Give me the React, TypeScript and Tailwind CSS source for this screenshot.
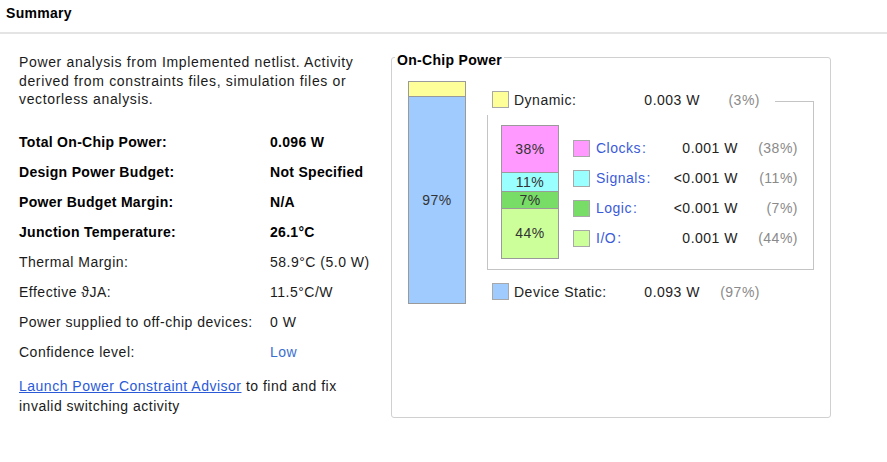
import React from "react";

const font = { fontFamily: '"Liberation Sans", Arial, sans-serif' };

function Sq({ color }: { color: string }) {
  return <div className={`w-[17px] h-[17px] border border-[#a8a8a8] shrink-0 ${color}`} />;
}

function TopRow({ color, label, value, pct, line }: { color: string; label: string; value: string; pct: string; line?: boolean }) {
  return (
    <div className="flex items-start h-[24px] pl-[5px]">
      <Sq color={color} />
      <div className="ml-[5px] w-[96px] leading-[18px] text-[#222]">{label}</div>
      <div className="w-[90px] text-right leading-[18px] text-[#222]">{value}</div>
      <div className="w-[60px] text-right leading-[18px] text-[#8a8a8a]">{pct}</div>
      {line ? <div className="ml-[15px] flex-1 self-stretch mt-[10px] border-t border-r border-[#c4c4c4]" /> : null}
    </div>
  );
}

function LegRow({ color, label, value, pct }: { color: string; label: string; value: string; pct: string }) {
  return (
    <div className="flex items-center h-[30px]">
      <Sq color={color} />
      <div className="ml-[6px] w-[70px] text-[#3a5bd9] whitespace-nowrap">
        {label}
        <span className="ml-[1px]">:</span>
      </div>
      <div className="w-[72px] text-right text-[#222] whitespace-nowrap">{value}</div>
      <div className="w-[60px] text-right text-[#8a8a8a]">{pct}</div>
    </div>
  );
}

export default function App() {
  const rows: [string, string, boolean, string?][] = [
    ["Total On-Chip Power:", "0.096 W", true],
    ["Design Power Budget:", "Not Specified", true],
    ["Power Budget Margin:", "N/A", true],
    ["Junction Temperature:", "26.1°C", true],
    ["Thermal Margin:", "58.9°C (5.0 W)", false],
    ["Effective ϑJA:", "11.5°C/W", false],
    ["Power supplied to off-chip devices:", "0 W", false],
    ["Confidence level:", "Low", false, "link"],
  ];
  return (
    <div className="w-[887px] h-[462px] bg-white text-[14px] tracking-[0.5px] text-[#1a1a1a] overflow-hidden" style={font}>
      <div className="h-[34px] border-b-2 border-[#e4e4e4]">
        <div className="pl-[6px] pt-[5px] leading-[16px] font-bold tracking-[0.3px] text-black">Summary</div>
      </div>
      <div className="flex">
        <div className="w-[372px] pl-[19px] pt-[19px]">
          <div className="leading-[18.5px] whitespace-nowrap tracking-[0.65px]">
            Power analysis from Implemented netlist. Activity
            <br />
            derived from constraints files, simulation files or
            <br />
            vectorless analysis.
          </div>
          <div className="mt-[19px]">
            {rows.map(([l, v, b, k]) => (
              <div key={l} className={`flex items-center h-[30px] whitespace-nowrap ${b ? "font-bold tracking-[0.3px] text-black" : ""}`}>
                <div className="w-[251px]">{l}</div>
                <div className={k ? "text-[#3a6fd0]" : ""}>{v}</div>
              </div>
            ))}
          </div>
          <div className="mt-[8px] leading-[20px] whitespace-nowrap">
            <span className="text-[#2a5ad7] underline">Launch Power Constraint Advisor</span> to find and fix
            <br />
            invalid switching activity
          </div>
        </div>
        <fieldset className="ml-[19px] mt-[12px] w-[440px] border border-[#d0d0d0] rounded-[3px]">
          <legend className="ml-[3px] px-[2px] pt-[6px] leading-[16px] font-bold tracking-[0.3px] text-black">On-Chip Power</legend>
          <div className="h-[349px] pl-[16px] pt-[13px] flex items-start">
            <div className="w-[58px] border border-[#9a9a9a] flex flex-col">
              <div className="h-[14px] bg-[#ffff99]" />
              <div className="h-[207px] bg-[#9fcbff] border-t border-[#9a9a9a] flex items-center justify-center text-[#333]">97%</div>
            </div>
            <div className="ml-[21px] w-[327px] mt-[10px]">
              <TopRow color="bg-[#ffff99]" label="Dynamic:" value="0.003 W" pct="(3%)" line />
              <div className="h-[155px] border-l border-r border-b border-[#c4c4c4] pt-[10px] pl-[13px] flex items-start">
                <div className="w-[58px] border border-[#9a9a9a] flex flex-col text-[#333]">
                  <div className="h-[46px] bg-[#ff99ff] flex items-center justify-center">38%</div>
                  <div className="h-[19px] bg-[#99ffff] border-t border-[#9a9a9a] flex items-center justify-center">11%</div>
                  <div className="h-[17px] bg-[#77dd66] border-t border-[#9a9a9a] flex items-center justify-center">7%</div>
                  <div className="h-[50px] bg-[#ccff99] border-t border-[#9a9a9a] flex items-center justify-center">44%</div>
                </div>
                <div className="ml-[14px] mt-[8px] flex flex-col">
                  <LegRow color="bg-[#ff99ff]" label="Clocks" value="0.001 W" pct="(38%)" />
                  <LegRow color="bg-[#99ffff]" label="Signals" value="<0.001 W" pct="(11%)" />
                  <LegRow color="bg-[#77dd66]" label="Logic" value="<0.001 W" pct="(7%)" />
                  <LegRow color="bg-[#ccff99]" label="I/O" value="0.001 W" pct="(44%)" />
                </div>
              </div>
              <div className="mt-[13px]">
                <TopRow color="bg-[#9fcbff]" label="Device Static:" value="0.093 W" pct="(97%)" />
              </div>
            </div>
          </div>
        </fieldset>
      </div>
    </div>
  );
}
